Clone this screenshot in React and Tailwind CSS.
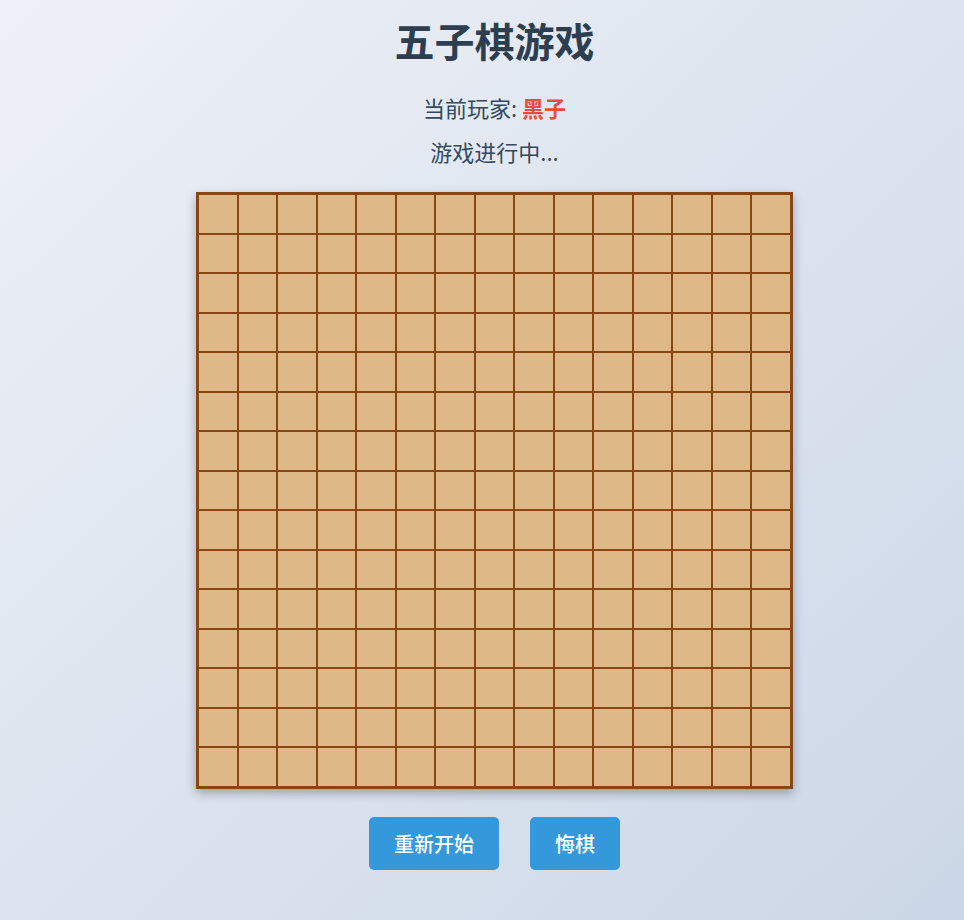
import React from "react";

export default function App() {
  const cells = Array.from({ length: 225 }, (_, i) => i);
  return (
    <div
      className="min-h-[920px] w-full bg-gradient-to-br from-[#eef1f7] to-[#ccd7e7] flex flex-col items-center pl-[25px] text-[#2c3e50]"
      style={{ fontFamily: '"Noto Sans CJK SC", "Noto Sans", sans-serif' }}
    >
      <h1 className="mt-[16px] text-[40px] leading-[48px] font-bold text-[#2c3e50]">五子棋游戏</h1>
      <div className="mt-[27px] text-[22px] leading-[33px] text-[#34495e]">
        当前玩家: <span className="font-bold text-[#e74c3c]">黑子</span>
      </div>
      <div className="mt-[11px] text-[22px] leading-[33px] text-[#34495e]">游戏进行中...</div>
      <div className="mt-[24px] w-[597px] h-[597px] border-2 border-[#8b4513] bg-[#deb887] grid grid-cols-15 grid-rows-15 shadow-[0_4px_10px_rgba(0,0,0,0.3)]">
        {cells.map((i) => (
          <div key={i} className="border border-[#8b4513]" />
        ))}
      </div>
      <div className="mt-[28px] flex gap-[31px]">
        <button className="bg-[#3498db] text-white text-[20px] font-medium leading-[29px] px-[25px] py-[12px] rounded-[5px]">重新开始</button>
        <button className="bg-[#3498db] text-white text-[20px] font-medium leading-[29px] px-[25px] py-[12px] rounded-[5px]">悔棋</button>
      </div>
    </div>
  );
}
